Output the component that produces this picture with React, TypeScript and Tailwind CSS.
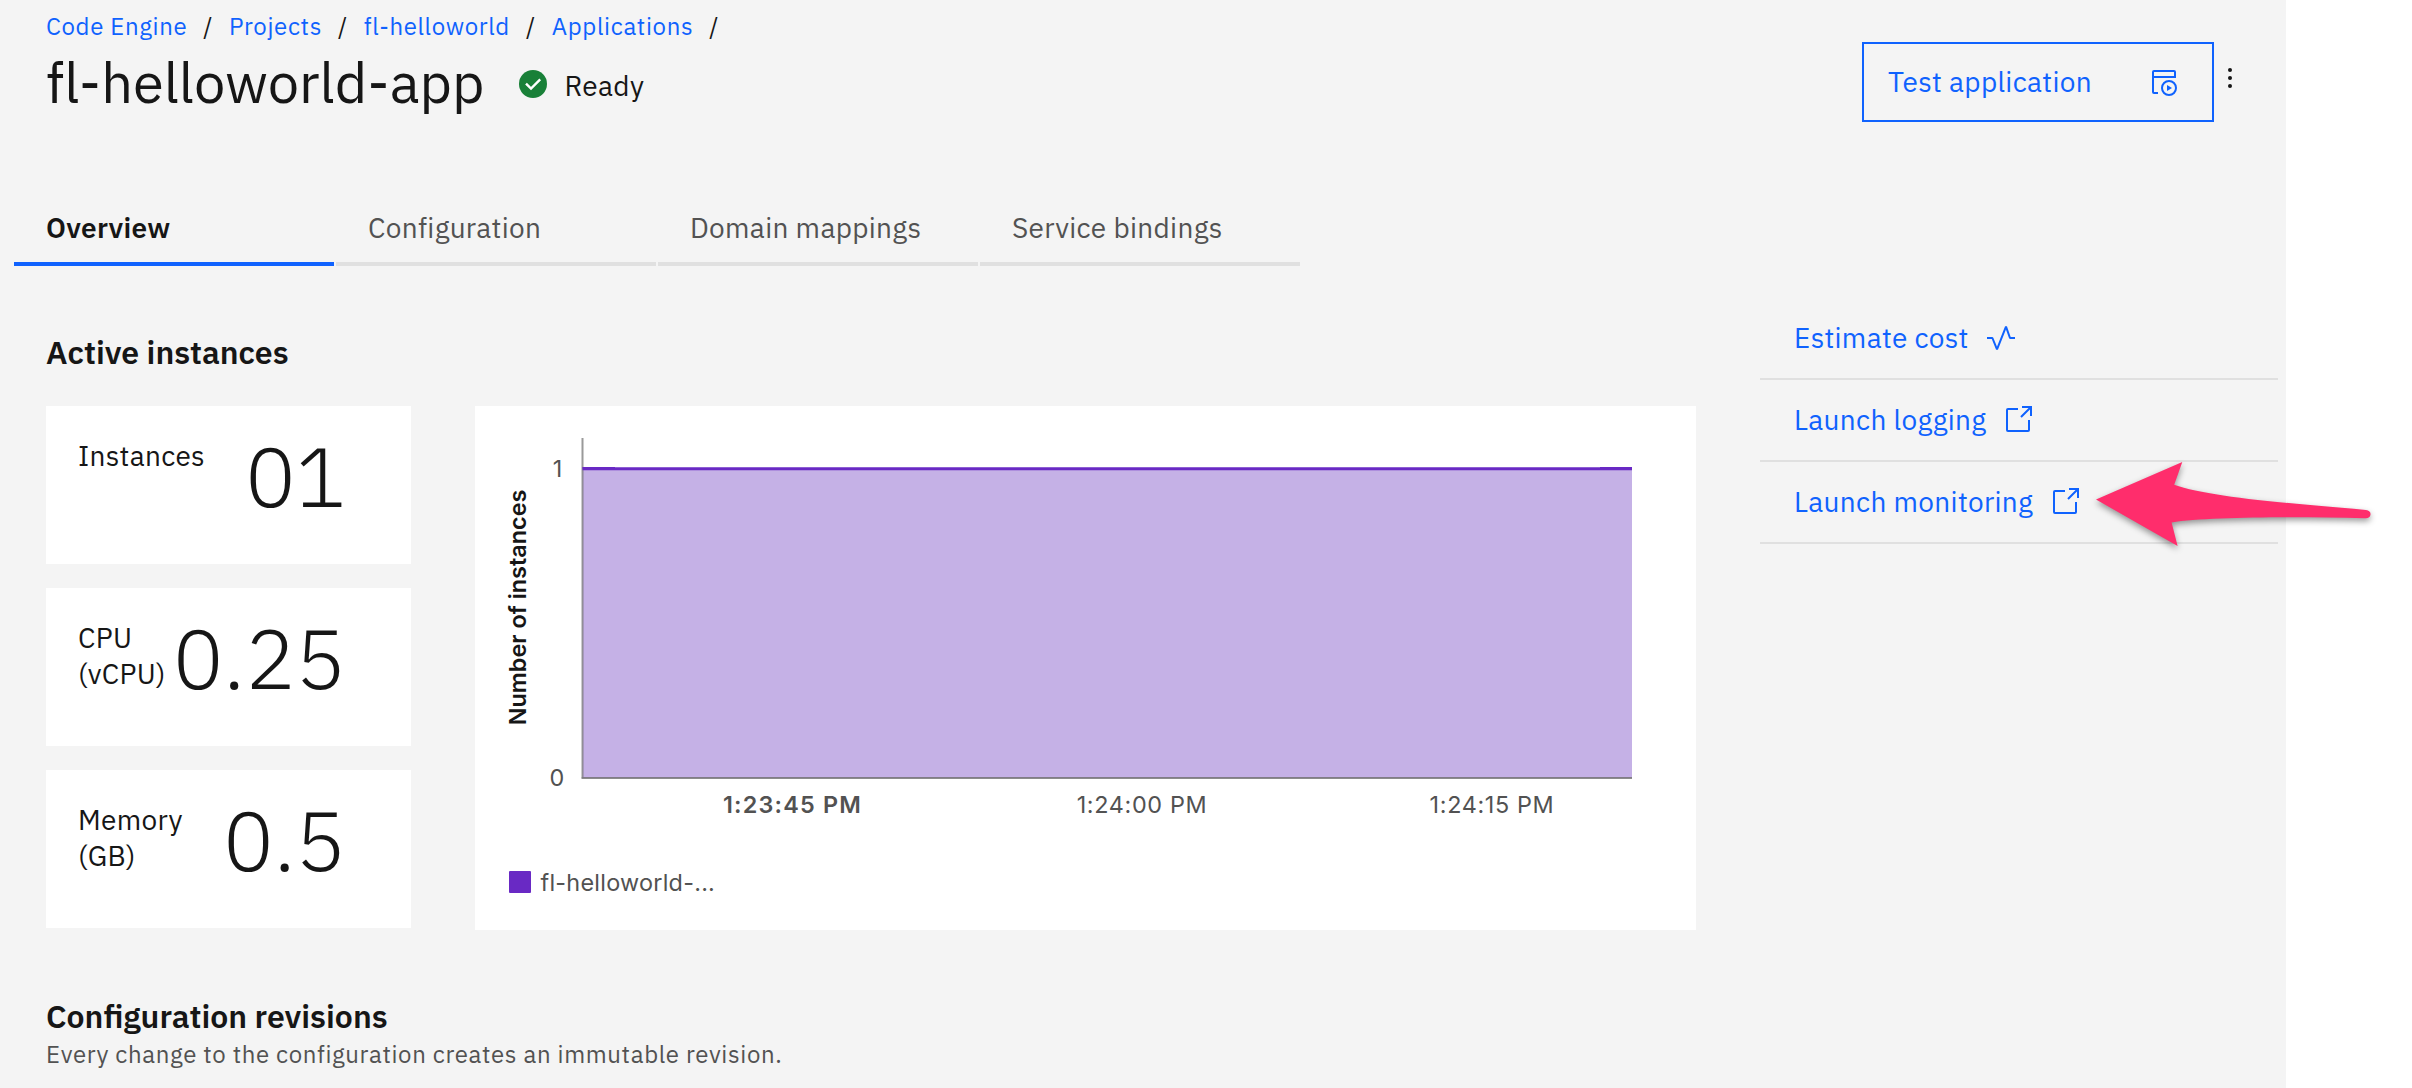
import type { ReactNode } from "react";

const breadcrumbs = ["Code Engine", "Projects", "fl-helloworld", "Applications"];

const tabs = ["Overview", "Configuration", "Domain mappings", "Service bindings"];

const stats = [
  { label: "Instances", value: "01" },
  { label: "CPU (vCPU)", value: "0.25" },
  { label: "Memory (GB)", value: "0.5" },
];

function ReadyIcon() {
  return (
    <svg className="size-7" viewBox="0 0 28 28" fill="none">
      <circle cx="14" cy="14" r="14" fill="#198038" />
      <path d="M7 13.6 12 18.6 21.2 9.4" stroke="#fff" strokeWidth="2.4" />
    </svg>
  );
}

function TestIcon() {
  return (
    <svg className="size-8" viewBox="0 0 32 32" fill="none" stroke="currentColor" strokeWidth="2">
      <path d="M10 27H6a1 1 0 0 1-1-1V6a1 1 0 0 1 1-1h20a1 1 0 0 1 1 1v5H5" />
      <circle cx="21" cy="22" r="7" />
      <path d="M19 19v6l5-3z" fill="currentColor" stroke="none" />
    </svg>
  );
}

function ActivityIcon() {
  return (
    <svg className="size-8" viewBox="0 0 32 32" fill="none" stroke="currentColor" strokeWidth="2" strokeLinejoin="bevel">
      <path d="M2 16h5.4L12 27.4 21 4.6 25 16h5" />
    </svg>
  );
}

function LaunchIcon() {
  return (
    <svg className="size-8" viewBox="0 0 32 32" fill="none" stroke="currentColor" strokeWidth="2">
      <path d="M16 5H6a1 1 0 0 0-1 1v20a1 1 0 0 0 1 1h20a1 1 0 0 0 1-1V16" />
      <path d="M20 3h9v9M29 3 19 13" />
    </svg>
  );
}

function Header() {
  return (
    <header className="flex h-[186px] shrink-0 justify-between pr-10 pl-[46px]">
      <div className="pt-[10px]">
        <nav className="flex text-2xl leading-8 tracking-[0.64px]">
          {breadcrumbs.map((crumb) => (
            <span key={crumb} className="flex">
              <a className="text-[#0f62fe]">{crumb}</a>
              <span className="mx-4">/</span>
            </span>
          ))}
        </nav>
        <div className="mt-1 flex">
          <h1 className="text-[56px] leading-[72px]">fl-helloworld-app</h1>
          <div className="ml-[34px] flex gap-[18px] pt-6">
            <ReadyIcon />
            <span className="text-[28px] leading-8 tracking-[0.32px]">Ready</span>
          </div>
        </div>
      </div>
      <div className="flex pt-[42px]">
        <button className="flex h-20 w-[352px] items-center justify-between border-2 border-[#0f62fe] pr-8 pl-6 text-[28px] tracking-[0.32px] text-[#0f62fe]">
          <span>Test application</span>
          <TestIcon />
        </button>
        <svg className="mt-5 size-8" viewBox="0 0 32 32" fill="#161616">
          <circle cx="16" cy="8" r="2" />
          <circle cx="16" cy="16" r="2" />
          <circle cx="16" cy="24" r="2" />
        </svg>
      </div>
    </header>
  );
}

function Tabs() {
  return (
    <div className="flex shrink-0 gap-0.5 pl-3.5">
      {tabs.map((tab, i) => (
        <div
          key={tab}
          className={
            i === 0
              ? "flex h-20 w-80 items-center border-b-4 border-[#0f62fe] pt-[7px] pl-8 text-[28px] font-semibold tracking-[0.32px] text-[#161616]"
              : "flex h-20 w-80 items-center border-b-4 border-[#e0e0e0] pt-[7px] pl-8 text-[28px] tracking-[0.32px] text-[#525252]"
          }
        >
          {tab}
        </div>
      ))}
    </div>
  );
}

function Chart() {
  return (
    <svg className="h-[524px] w-[1221px] bg-white" viewBox="0 0 1221 524" fontFamily="Inter, sans-serif" fontSize="23.4">
      <rect x="107.5" y="62.5" width="1049.5" height="309.5" fill="#c5b1e6" />
      <path d="M107.5 32V371.5" stroke="#6f6f6f" strokeOpacity="0.7" strokeWidth="2" />
      <path d="M106.5 372H1157" stroke="#6f6f6f" strokeOpacity="0.8" strokeWidth="2" />
      <path d="M107.5 62.75H1157" stroke="#6929c4" strokeWidth="2.8" />
      <path d="M107.5 61.8H140M1125 61.8H1157" stroke="#6929c4" strokeWidth="1.6" />
      <g fill="#525252" letterSpacing="0.64">
        <text x="88" y="71" textAnchor="end">1</text>
        <text x="90" y="380" textAnchor="end">0</text>
        <text x="317.5" y="407" textAnchor="middle" fontWeight="600" letterSpacing="1.2">1:23:45 PM</text>
        <text x="667" y="407" textAnchor="middle">1:24:00 PM</text>
        <text x="1017" y="407" textAnchor="middle">1:24:15 PM</text>
        <text x="65.5" y="485" letterSpacing="0.25">fl-helloworld-...</text>
      </g>
      <text transform="translate(50.5 201.5) rotate(-90)" textAnchor="middle" fontWeight="600" fill="#161616">
        Number of instances
      </text>
      <rect x="34" y="465" width="22" height="22" rx="1" fill="#6929c4" />
    </svg>
  );
}

function Action({ label, children }: { label: string; children: ReactNode }) {
  return (
    <a className="flex h-[82px] items-center gap-4 border-b-2 border-[#e0e0e0] pl-[34px] text-[28px] tracking-[0.32px] text-[#0f62fe]">
      <span className="-mt-px">{label}</span>
      {children}
    </a>
  );
}

function PointerArrow() {
  return (
    <svg className="absolute top-[450px] left-[2086px] h-[110px] w-[300px] drop-shadow-[0_3px_3px_rgba(0,0,0,0.4)]" viewBox="0 0 300 110">
      <path
        d="M10 49.5 96.3 12 88.2 34.7C120 46 190 52.5 280 60Q285 61 284.5 64.5 284 68.5 279 68.2C200 66.5 120 67 85.6 72.5L91.6 96Z"
        fill="#ff2d6c"
      />
    </svg>
  );
}

export default function App() {
  return (
    <div className="relative h-[1088px] w-[2412px] overflow-hidden bg-white font-['IBM_Plex_Sans','Open_Sans',sans-serif] text-[#161616]">
      <main className="flex h-full w-[2286px] flex-col bg-[#f4f4f4]">
        <Header />
        <Tabs />
        <div className="flex gap-16 pl-[46px]">
          <div className="w-[1650px] pt-[66px]">
            <h2 className="text-[32px] leading-10 font-semibold">Active instances</h2>
            <div className="mt-[34px] flex gap-16">
              <div className="flex w-[365px] flex-col gap-6">
                {stats.map((s) => (
                  <div key={s.label} className="flex h-[158px] justify-between bg-white pr-[65px] pl-8">
                    <span className="pt-8 text-[28px] leading-9 tracking-[0.32px]">{s.label}</span>
                    <span className="pt-7 text-[84px] leading-[84px] font-light">{s.value}</span>
                  </div>
                ))}
              </div>
              <Chart />
            </div>
            <h2 className="mt-[66px] text-[32px] leading-10 font-semibold">Configuration revisions</h2>
            <p className="text-2xl leading-9 tracking-[0.64px] text-[#525252]">
              Every change to the configuration creates an immutable revision.
            </p>
          </div>
          <aside className="w-[518px] pt-8">
            <Action label="Estimate cost">
              <ActivityIcon />
            </Action>
            <Action label="Launch logging">
              <LaunchIcon />
            </Action>
            <Action label="Launch monitoring">
              <LaunchIcon />
            </Action>
          </aside>
        </div>
      </main>
      <PointerArrow />
    </div>
  );
}
